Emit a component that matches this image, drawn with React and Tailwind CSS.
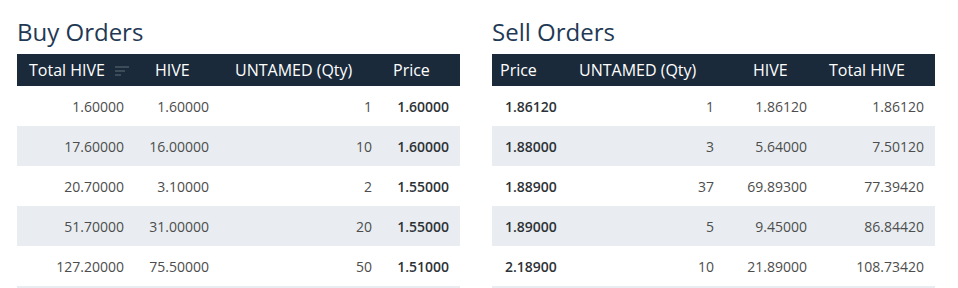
import React from "react";

const buy = [
  ["1.60000", "1.60000", "1", "1.60000"],
  ["17.60000", "16.00000", "10", "1.60000"],
  ["20.70000", "3.10000", "2", "1.55000"],
  ["51.70000", "31.00000", "20", "1.55000"],
  ["127.20000", "75.50000", "50", "1.51000"],
];

const sell = [
  ["1.86120", "1", "1.86120", "1.86120"],
  ["1.88000", "3", "5.64000", "7.50120"],
  ["1.88900", "37", "69.89300", "77.39420"],
  ["1.89000", "5", "9.45000", "86.84420"],
  ["2.18900", "10", "21.89000", "108.73420"],
];

function SortIcon() {
  return (
    <svg width="16" height="12" viewBox="0 0 16 12" className="ml-[10px] mt-[2px]">
      <rect x="0" y="1" width="14" height="2" fill="#3e4c5a" />
      <rect x="0" y="5" width="10" height="2" fill="#3e4c5a" />
      <rect x="0" y="9" width="6" height="2" fill="#3e4c5a" />
    </svg>
  );
}

function BuyTable() {
  return (
    <div className="w-[443px]">
      <h2 className="h-8 text-[24px] leading-8 font-medium text-[#1f3955] mb-[6px]">Buy Orders</h2>
      <div className="grid grid-cols-[126px_80px_158px_79px] h-8 bg-[#1b2a3a] text-white text-[16px] items-center">
        <div className="pl-3 flex items-center">Total HIVE<SortIcon /></div>
        <div className="pl-3">HIVE</div>
        <div className="pl-3">UNTAMED (Qty)</div>
        <div className="pl-3">Price</div>
      </div>
      {buy.map((r, i) => (
        <div
          key={i}
          className={`grid grid-cols-[126px_80px_158px_79px] h-10 items-center text-[14px] text-[#4d4d4d] ${i % 2 === 1 ? "bg-[#e9edf1]" : "bg-white"}`}
        >
          <div className="text-right pr-[19px]">{r[0]}</div>
          <div className="text-right pr-[14px]">{r[1]}</div>
          <div className="text-right pr-[9px]">{r[2]}</div>
          <div className="text-right pr-[11px] font-semibold text-[#2d3236]">{r[3]}</div>
        </div>
      ))}
      <div className="h-[2px] bg-[#e9edf1]" />
    </div>
  );
}

function SellTable() {
  return (
    <div className="w-[443px]">
      <h2 className="h-8 text-[24px] leading-8 font-medium text-[#1f3955] mb-[6px]">Sell Orders</h2>
      <div className="grid grid-cols-[79px_174px_76px_114px] h-8 bg-[#1b2a3a] text-white text-[16px] items-center">
        <div className="pl-2">Price</div>
        <div className="pl-2">UNTAMED (Qty)</div>
        <div className="pl-2">HIVE</div>
        <div className="pl-2">Total HIVE</div>
      </div>
      {sell.map((r, i) => (
        <div
          key={i}
          className={`grid grid-cols-[79px_174px_76px_114px] h-10 items-center text-[14px] text-[#4d4d4d] ${i % 2 === 1 ? "bg-[#e9edf1]" : "bg-white"}`}
        >
          <div className="pl-[13px] font-semibold text-[#2d3236]">{r[0]}</div>
          <div className="text-right pr-[31px]">{r[1]}</div>
          <div className="text-right pr-[14px]">{r[2]}</div>
          <div className="text-right pr-[11px]">{r[3]}</div>
        </div>
      ))}
      <div className="h-[2px] bg-[#e9edf1]" />
    </div>
  );
}

export default function App() {
  return (
    <div className="w-[958px] h-[288px] overflow-hidden bg-white font-['Open_Sans',sans-serif] pt-4 pl-[17px] flex gap-[32px]">
      <BuyTable />
      <SellTable />
    </div>
  );
}
